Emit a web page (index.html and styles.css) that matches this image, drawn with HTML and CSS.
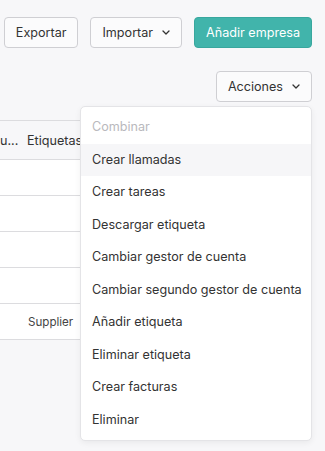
FILE: index.html
```html
<!DOCTYPE html>
<html lang="es">
<head>
<meta charset="utf-8">
<link rel="stylesheet" href="styles.css">
</head>
<body>
<div class="page">
  <div class="toolbar">
    <button class="btn">Exportar</button>
    <button class="btn">Importar <svg class="chev" viewBox="0 0 8 5" width="8" height="5"><path d="M1 1l3 3 3-3" fill="none" stroke="#333" stroke-width="1.3" stroke-linecap="round" stroke-linejoin="round"/></svg></button>
    <button class="btn btn-primary">Añadir empresa</button>
  </div>
  <div class="actions-row">
    <button class="btn">Acciones <svg class="chev" viewBox="0 0 8 5" width="8" height="5"><path d="M1 1l3 3 3-3" fill="none" stroke="#333" stroke-width="1.3" stroke-linecap="round" stroke-linejoin="round"/></svg></button>
  </div>
  <div class="table">
    <div class="row head">
      <div class="c1">u...</div>
      <div class="c2">Etiquetas</div>
    </div>
    <div class="row"><div class="c1"></div><div class="c2"></div></div>
    <div class="row"><div class="c1"></div><div class="c2"></div></div>
    <div class="row"><div class="c1"></div><div class="c2"></div></div>
    <div class="row"><div class="c1"></div><div class="c2"></div></div>
    <div class="row"><div class="c1"></div><div class="c2 small">Supplier</div></div>
  </div>
  <ul class="menu">
    <li class="disabled">Combinar</li>
    <li class="hover">Crear llamadas</li>
    <li>Crear tareas</li>
    <li>Descargar etiqueta</li>
    <li>Cambiar gestor de cuenta</li>
    <li>Cambiar segundo gestor de cuenta</li>
    <li>Añadir etiqueta</li>
    <li>Eliminar etiqueta</li>
    <li>Crear facturas</li>
    <li>Eliminar</li>
  </ul>
</div>
</body>
</html>
```
FILE: styles.css
```css
* { box-sizing: border-box; }
html, body { margin: 0; padding: 0; }
body {
  background: #f7f7f9;
  font-family: Inter, "Noto Sans", sans-serif;
  color: #333;
  width: 325px;
  height: 451px;
  overflow: hidden;
}
.page { position: relative; height: 451px; }
.toolbar {
  display: flex;
  justify-content: flex-end;
  gap: 12px;
  padding: 17px 13px 0 0;
}
.btn {
  font-family: inherit;
  font-size: 12.6px;
  color: #333;
  height: 31px;
  padding: 0 11px;
  background: #fbfbfc;
  border: 1px solid #cfcfd3;
  border-radius: 4px;
  display: inline-flex;
  align-items: center;
  gap: 9px;
  white-space: nowrap;
  cursor: pointer;
}
.chev { display: block; }
.btn-primary {
  background: #41b4ab;
  border-color: #38a79e;
  color: #fff;
  padding: 0 11px;
}
.actions-row {
  display: flex;
  justify-content: flex-end;
  padding: 23px 13px 0 0;
}
.table {
  margin-top: 18px;
  width: 312px;
  border-top: 1px solid #dcdcdf;
}
.row {
  display: flex;
  height: 36px;
  align-items: center;
  background: #fff;
  border-bottom: 1px solid #dcdcdf;
  font-size: 12px;
}
.row.head {
  height: 39px;
  background: #f7f7f9;
  font-size: 12.6px;
}
.c1 { width: 27px; flex: none; white-space: nowrap; overflow: hidden; }
.c2 { flex: 1; padding-left: 0; white-space: nowrap; }
.small { font-size: 11.6px; color: #444; padding-left: 1px; }
.menu {
  position: absolute;
  top: 106px;
  left: 80px;
  width: 232px;
  margin: 0;
  padding: 4px 0;
  list-style: none;
  background: #fff;
  border: 1px solid #e4e4e7;
  border-radius: 5px;
  box-shadow: 0 2px 6px rgba(0,0,0,0.06);
}
.menu li {
  font-size: 12.6px;
  line-height: 16.5px;
  padding: 8px 11px;
  white-space: nowrap;
  color: #333;
}
.menu li.disabled { color: #b9b9bd; }
.menu li.hover { background: #f6f6f8; }
```
